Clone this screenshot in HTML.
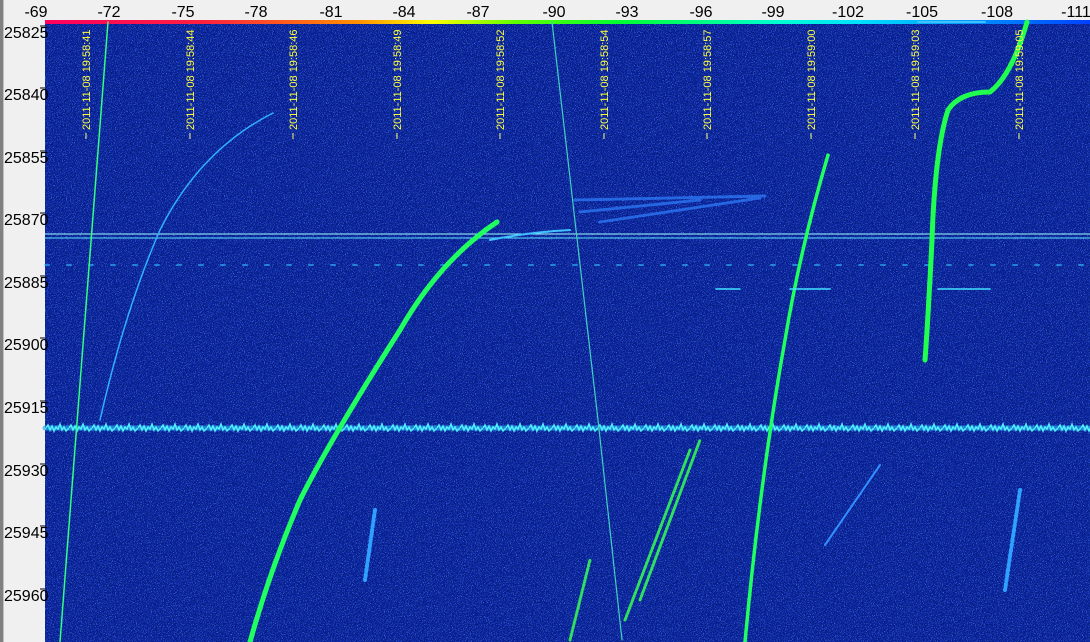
<!DOCTYPE html>
<html><head><meta charset="utf-8"><style>
html,body{margin:0;padding:0;width:1090px;height:642px;overflow:hidden;background:#f0f0f0;font-family:"Liberation Sans",sans-serif}
</style></head><body>
<svg width="1090" height="642" xmlns="http://www.w3.org/2000/svg" style="position:absolute;left:0;top:0">
<defs>
<linearGradient id="cb" x1="0" x2="1" y1="0" y2="0">
<stop offset="0" stop-color="#ff0060"/><stop offset="0.15" stop-color="#ff2040"/>
<stop offset="0.3" stop-color="#ff9000"/><stop offset="0.37" stop-color="#ffff00"/>
<stop offset="0.45" stop-color="#60ff00"/><stop offset="0.55" stop-color="#00ff30"/>
<stop offset="0.7" stop-color="#00ffd0"/><stop offset="0.78" stop-color="#00e0ff"/>
<stop offset="1" stop-color="#0040ff"/></linearGradient>
<filter id="nz" x="0" y="0" width="100%" height="100%">
<feTurbulence type="fractalNoise" baseFrequency="1.0" numOctaves="1" seed="3"/>
<feColorMatrix values="0 0 0 0 0  0 0 0 0 0.01  0 0 0 0 0.15  -4 0 0 0 2.5"/>
</filter>
<filter id="nz2" x="0" y="0" width="100%" height="100%">
<feTurbulence type="fractalNoise" baseFrequency="1.1" numOctaves="1" seed="9"/>
<feColorMatrix values="0 0 0 0 0.12  0 0 0 0 0.3  0 0 0 0 1  4 0 0 0 -2.2"/>
</filter>
<pattern id="zz" x="0" y="418" width="23" height="20" patternUnits="userSpaceOnUse">
<path d="M0 10 L2 7 L4 12 L6 8 L8 13 L10 9 L12 11 L14 6 L16 12 L18 9 L20 13 L23 10" fill="none" stroke="#50f0ff" stroke-width="1.5"/>
</pattern>
</defs>
<rect x="0" y="0" width="3" height="642" fill="#808080"/>
<rect x="3" y="0" width="1" height="642" fill="#c0c0c0"/>
<rect x="45" y="20" width="1045" height="4" fill="url(#cb)"/>
<rect x="45" y="24" width="1045" height="618" fill="#1028bc"/>
<rect x="45" y="24" width="1045" height="618" filter="url(#nz)"/>
<rect x="45" y="24" width="1045" height="618" filter="url(#nz2)"/>
<g font-size="16" fill="#000" text-anchor="middle">
<text x="36" y="17">-69</text><text x="109" y="17">-72</text><text x="183" y="17">-75</text>
<text x="256" y="17">-78</text><text x="331" y="17">-81</text><text x="404" y="17">-84</text>
<text x="478" y="17">-87</text><text x="554" y="17">-90</text><text x="627" y="17">-93</text>
<text x="701" y="17">-96</text><text x="773" y="17">-99</text><text x="848" y="17">-102</text>
<text x="922" y="17">-105</text><text x="997" y="17">-108</text><text x="1076" y="17">-111</text>
</g>
<g font-size="16" fill="#000">
<text x="4" y="38">25825</text><text x="4" y="100">25840</text><text x="4" y="163">25855</text>
<text x="4" y="225">25870</text><text x="4" y="288">25885</text><text x="4" y="350">25900</text>
<text x="4" y="413">25915</text><text x="4" y="476">25930</text><text x="4" y="538">25945</text>
<text x="4" y="601">25960</text>
</g>
<g stroke="#000" stroke-width="1">
<path d="M40 26h5M40 88h5M40 151h5M40 213h5M40 276h5M40 338h5M40 401h5M40 464h5M40 526h5M40 589h5"/>
</g>
<g fill="none" stroke-linecap="round">
<path d="M45 234H1090" stroke="#a0ffff" stroke-width="1"/>
<path d="M45 238H1090" stroke="#60e0ff" stroke-width="1"/>
<path d="M45 428 H1090" stroke="#2aa8f0" stroke-width="5" opacity="0.7"/>
<rect x="45" y="418" width="1045" height="20" fill="url(#zz)" stroke="none"/>
<path d="M45 265H1090" stroke="#30c0ff" stroke-width="2" stroke-dasharray="4 18" opacity="0.6"/>
<path d="M108 22 L60 642" stroke="#30ff80" stroke-width="1.5"/>
<path d="M273 113 Q200 150 160 230 Q125 310 100 420" stroke="#30b0ff" stroke-width="1.5"/>
<path d="M497 222 Q440 260 400 330 Q330 440 300 500 Q270 570 250 642" stroke="#20ff60" stroke-width="5"/>
<path d="M490 240 Q530 232 570 230" stroke="#40c0ff" stroke-width="2"/>
<path d="M552 22 L598 420 L622 640" stroke="#40d0c0" stroke-width="1.2"/>
<path d="M828 155 Q800 250 785 340 Q760 480 745 642" stroke="#20ff60" stroke-width="3.5"/>
<path d="M1027 22 Q1012 75 990 92 Q960 92 948 110 Q935 150 932 240 Q928 320 925 360" stroke="#20ff50" stroke-width="5"/>
<path d="M575 200 L765 196 M580 212 L700 200 M600 222 L760 198" stroke="#3080ff" stroke-width="3" stroke-dasharray="2 2" opacity="0.7"/>
<path d="M640 600 L700 440 M625 620 L690 450 M570 640 L590 560" stroke="#30e060" stroke-width="3" stroke-dasharray="2 2"/>
<path d="M880 465 L825 545" stroke="#3090ff" stroke-width="2"/>
<path d="M938 289 H990 M716 289 H740 M790 289 H830" stroke="#40e0ff" stroke-width="1.5"/>
<path d="M918 22 H985" stroke="#40c0ff" stroke-width="2"/>
<path d="M375 510 L365 580 M1020 490 L1005 590" stroke="#30a0ff" stroke-width="4" stroke-dasharray="2 3"/>
</g>
<g fill="#ffff40" font-size="11" stroke="none">
<g transform="translate(90,130) rotate(-90)"><text>2011-11-08 19:58:41</text></g>
<g transform="translate(194,130) rotate(-90)"><text>2011-11-08 19:58:44</text></g>
<g transform="translate(297,130) rotate(-90)"><text>2011-11-08 19:58:46</text></g>
<g transform="translate(401,130) rotate(-90)"><text>2011-11-08 19:58:49</text></g>
<g transform="translate(504,130) rotate(-90)"><text>2011-11-08 19:58:52</text></g>
<g transform="translate(608,130) rotate(-90)"><text>2011-11-08 19:58:54</text></g>
<g transform="translate(711,130) rotate(-90)"><text>2011-11-08 19:58:57</text></g>
<g transform="translate(815,130) rotate(-90)"><text>2011-11-08 19:59:00</text></g>
<g transform="translate(919,130) rotate(-90)"><text>2011-11-08 19:59:03</text></g>
<g transform="translate(1023,130) rotate(-90)"><text>2011-11-08 19:59:05</text></g>
</g>
<g stroke="#ffff80" stroke-width="1">
<path d="M86 133v6M190 133v6M293 133v6M397 133v6M500 133v6M604 133v6M707 133v6M811 133v6M915 133v6M1019 133v6"/>
</g>
</svg>
</body></html>
